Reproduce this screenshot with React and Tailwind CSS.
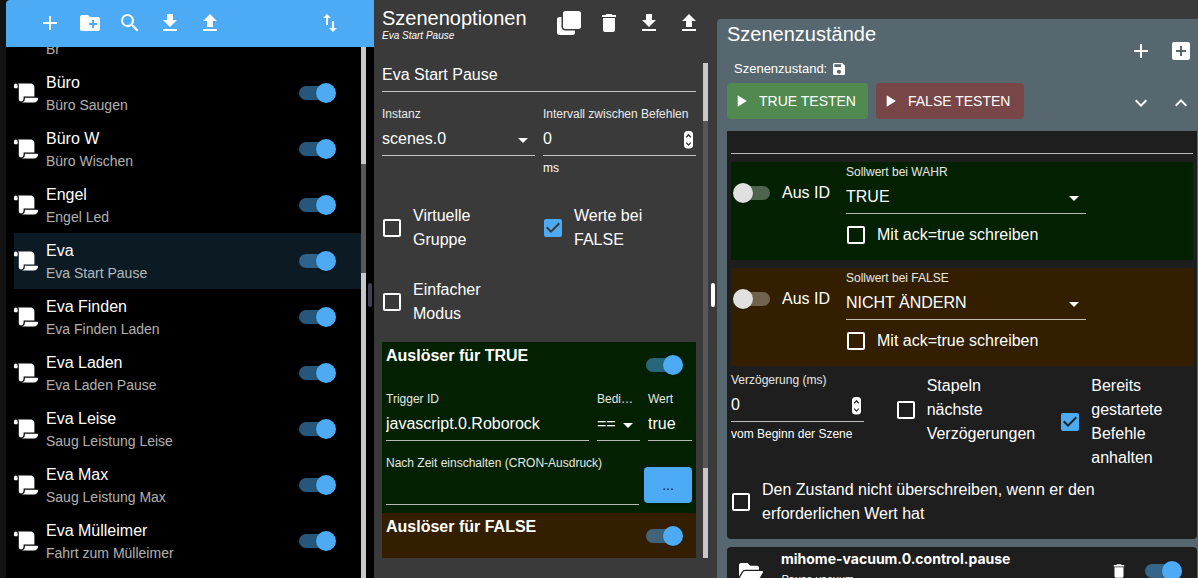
import React from "react";
import { FaClone, FaFolderOpen, FaScroll } from "react-icons/fa";
import {
  MdAdd,
  MdAddBox,
  MdArrowDropDown,
  MdCheckBox,
  MdCheckBoxOutlineBlank,
  MdCreateNewFolder,
  MdDelete,
  MdDownload,
  MdExpandLess,
  MdExpandMore,
  MdImportExport,
  MdPlayArrow,
  MdSave,
  MdSearch,
  MdUpload,
} from "react-icons/md";

const scenes = [
  { name: "Büro", desc: "Büro Saugen" },
  { name: "Büro W", desc: "Büro Wischen" },
  { name: "Engel", desc: "Engel Led" },
  { name: "Eva", desc: "Eva Start Pause", selected: true },
  { name: "Eva Finden", desc: "Eva Finden Laden" },
  { name: "Eva Laden", desc: "Eva Laden Pause" },
  { name: "Eva Leise", desc: "Saug Leistung Leise" },
  { name: "Eva Max", desc: "Saug Leistung Max" },
  { name: "Eva Mülleimer", desc: "Fahrt zum Mülleimer" },
];

const IconButton = ({ icon: Icon, label, size = 24 }) => (
  <button type="button" aria-label={label} className="flex size-10 shrink-0 items-center justify-center rounded-full text-white hover:bg-white/10">
    <Icon size={size} />
  </button>
);

const Toggle = ({ on = true, label, id }) => (
  <input
    id={id}
    type="checkbox"
    role="switch"
    aria-label={label}
    defaultChecked={on}
    className="relative h-5 w-[37px] shrink-0 cursor-pointer appearance-none before:absolute before:right-0 before:top-[3px] before:h-3.5 before:w-[34px] before:rounded-full before:bg-white/30 after:absolute after:left-0 after:top-0 after:size-5 after:rounded-full after:bg-[#e0e0e0] after:shadow checked:before:left-0 checked:before:right-auto checked:before:bg-[#4dabf5]/50 checked:after:left-auto checked:after:right-0 checked:after:bg-[#4dabf5]"
  />
);

const CheckField = ({ checked = false, textClass = "", children }) => (
  <label className="flex cursor-pointer items-center gap-[11px]">
    <span className="relative flex w-5 shrink-0 justify-center">
      <input type="checkbox" defaultChecked={checked} className="peer absolute inset-0 opacity-0" />
      <MdCheckBoxOutlineBlank size={24} className="shrink-0 peer-checked:hidden" />
      <MdCheckBox size={24} className="hidden shrink-0 text-[#4dabf5] peer-checked:block" />
    </span>
    <span className={textClass}>{children}</span>
  </label>
);

const Field = ({ label, helper, id, className = "", children }) => (
  <div className={className}>
    <label htmlFor={id} className="block text-xs leading-4 whitespace-nowrap text-white/90">
      {label}
    </label>
    {children}
    {helper && <p className="mt-1 text-xs leading-4 whitespace-nowrap">{helper}</p>}
  </div>
);

const TextInput = ({ id, value = "" }) => (
  <input id={id} defaultValue={value} className="block h-[34px] w-full border-b border-white/70 bg-transparent outline-none" />
);

const SelectInput = ({ id, value }) => (
  <div className="relative">
    <select id={id} className="block h-[34px] w-full appearance-none border-b border-white/70 bg-transparent outline-none">
      <option>{value}</option>
    </select>
    <MdArrowDropDown size={24} className="pointer-events-none absolute top-1.5 right-0" />
  </div>
);

const NumberInput = ({ id, value }) => (
  <div className="relative">
    <input
      id={id}
      type="number"
      defaultValue={value}
      className="block h-[34px] w-full border-b border-white/70 bg-transparent outline-none [appearance:textfield] [&::-webkit-inner-spin-button]:appearance-none"
    />
    <svg viewBox="0 0 9 18" className="pointer-events-none absolute top-[9px] right-[3px] h-[18px] w-[9px]" fill="none">
      <rect width="9" height="17.5" rx="3.5" fill="#fff" />
      <path d="M2.2 6.2 4.5 3.7 6.8 6.2M2.2 11.6 4.5 14.1 6.8 11.6" stroke="#333" strokeWidth="1.3" />
    </svg>
  </div>
);

const SceneList = () => (
  <aside className="relative flex min-w-0 flex-1 flex-col bg-black">
    <header className="flex h-[47px] shrink-0 items-start justify-between rounded-tl bg-[#4dabf5] px-6 pt-[3px]">
      <div className="flex">
        <IconButton icon={MdAdd} label="Neue Szene" />
        <IconButton icon={MdCreateNewFolder} label="Neuer Ordner" />
        <IconButton icon={MdSearch} label="Suchen" />
        <IconButton icon={MdDownload} label="Importieren" />
        <IconButton icon={MdUpload} label="Exportieren" />
      </div>
      <IconButton icon={MdImportExport} label="Sortieren" />
    </header>
    <div className="flex min-h-0 flex-1 px-2">
      <ul className="min-w-0 flex-1 overflow-hidden">
        <li className="flex h-[18px] flex-col justify-end overflow-hidden pb-1.5 pl-8 text-sm leading-5 text-white/70">Br</li>
        {scenes.map((scene) => (
          <li key={scene.name} className={`flex h-14 items-center gap-2 pr-[25px] ${scene.selected ? "bg-[#0c1a24]" : ""}`}>
            <FaScroll size={24} className="shrink-0" />
            <div className="min-w-0 flex-1">
              <p className="truncate leading-6">{scene.name}</p>
              <p className="truncate text-sm leading-5 text-white/70">{scene.desc}</p>
            </div>
            <Toggle label={scene.name} />
          </li>
        ))}
      </ul>
      <div className="flex w-[5px] shrink-0 flex-col bg-[#c8c8c8]">
        <div className="mt-[117px] h-[109px] bg-[#575757]" />
      </div>
    </div>
    <div className="absolute top-[49%] right-0.5 h-6 w-1 rounded-full bg-[#3f3f51]" />
  </aside>
);

const TriggerHeader = ({ title }) => (
  <div className="flex h-[49px] items-start justify-between pt-[2px] pr-[13px] pl-1">
    <h3 className="leading-6 font-bold">{title}</h3>
    <div className="flex pt-[11px]">
      <Toggle label={title} />
    </div>
  </div>
);

const SceneOptions = () => (
  <section className="relative flex min-w-0 flex-col">
    <header className="flex h-[47px] shrink-0 items-start justify-between px-2 pt-[3px]">
      <div className="pt-[3px]">
        <h2 className="text-xl leading-6">Szenenoptionen</h2>
        <p className="text-[10px] leading-3 italic">Eva Start Pause</p>
      </div>
      <div className="flex">
        <IconButton icon={FaClone} label="Duplizieren" />
        <IconButton icon={MdDelete} label="Löschen" />
        <IconButton icon={MdDownload} label="Importieren" />
        <IconButton icon={MdUpload} label="Exportieren" />
      </div>
    </header>
    <div className="mt-4 mb-5 flex min-h-0 flex-1 gap-[7px] pr-[9px] pl-2">
      <div className="min-w-0 flex-1 overflow-hidden">
        <input aria-label="Name" defaultValue="Eva Start Pause" className="block h-[29px] w-full border-b border-white/70 bg-transparent pb-1 outline-none" />
        <div className="mt-3.5 grid grid-cols-2 gap-x-2">
          <Field label="Instanz" id="instance">
            <SelectInput id="instance" value="scenes.0" />
          </Field>
          <Field label="Intervall zwischen Befehlen" id="interval" helper="ms">
            <NumberInput id="interval" value="0" />
          </Field>
        </div>
        <div className="mt-7 grid grid-cols-2 gap-x-2 gap-y-[26px]">
          <CheckField textClass="max-w-24">Virtuelle Gruppe</CheckField>
          <CheckField checked textClass="max-w-24">Werte bei FALSE</CheckField>
          <CheckField textClass="max-w-24">Einfacher Modus</CheckField>
        </div>
        <div className="mt-4 bg-[#032100] pb-2">
          <TriggerHeader title="Auslöser für TRUE" />
          <div className="flex gap-2 px-1">
            <Field label="Trigger ID" id="trigger" className="min-w-0 flex-1">
              <TextInput id="trigger" value="javascript.0.Roborock" />
            </Field>
            <Field label="Bedi…" id="condition" className="w-[43px]">
              <SelectInput id="condition" value="==" />
            </Field>
            <Field label="Wert" id="value" className="w-11">
              <TextInput id="value" value="true" />
            </Field>
          </div>
          <div className="mt-3.5 flex items-start gap-[5px] px-1">
            <Field label="Nach Zeit einschalten (CRON-Ausdruck)" id="cron" className="min-w-0 flex-1">
              <TextInput id="cron" />
            </Field>
            <button type="button" className="mt-3 h-9 w-12 rounded bg-[#4dabf5] text-sm text-black/85 shadow">
              ...
            </button>
          </div>
        </div>
        <div className="bg-[#331f00]">
          <TriggerHeader title="Auslöser für FALSE" />
        </div>
      </div>
      <div className="flex w-[5px] shrink-0 flex-col bg-[#c8c8c8]">
        <div className="mt-[58px] h-[347px] bg-[#575757]" />
      </div>
    </div>
    <div className="absolute top-[49%] right-0.5 h-6 w-1 rounded-full bg-white" />
  </section>
);

const SetpointBlock = ({ id, label, value, className }) => (
  <div className={`flex pt-0.5 pb-[13px] pl-0.5 ${className}`}>
    <div className="mt-[17px] flex h-6 w-[113px] shrink-0 items-center gap-3">
      <Toggle on={false} id={`${id}-from-id`} />
      <label htmlFor={`${id}-from-id`}>Aus ID</label>
    </div>
    <div className="w-60">
      <Field label={label} id={id}>
        <SelectInput id={id} value={value} />
      </Field>
      <div className="mt-[9px]">
        <CheckField>Mit ack=true schreiben</CheckField>
      </div>
    </div>
  </div>
);

const SceneStates = () => (
  <section className="flex min-w-0 flex-col pt-[19px]">
    <div className="flex-1 rounded-tl bg-[#57676f] pr-px pl-2.5">
      <header className="flex justify-between">
        <div className="pt-[3px]">
          <h2 className="text-xl leading-6">Szenenzustände</h2>
          <p className="mt-[15px] flex items-center gap-1 pl-[7px] text-[13px] leading-4">
            Szenenzustand: <MdSave size={16} />
          </p>
          <div className="mt-1.5 flex gap-2">
            <button type="button" className="flex h-9 w-[141px] items-center gap-2 rounded bg-[#508a50] pl-1 text-sm text-white">
              <MdPlayArrow size={20} /> TRUE TESTEN
            </button>
            <button type="button" className="flex h-9 w-[148px] items-center gap-2 rounded bg-[#784646] pl-1 text-sm text-white">
              <MdPlayArrow size={20} /> FALSE TESTEN
            </button>
          </div>
        </div>
        <div className="-mr-1 grid grid-cols-2 content-start gap-y-3 pt-3">
          <IconButton icon={MdAdd} label="Hinzufügen" />
          <IconButton icon={MdAddBox} label="Gruppe hinzufügen" />
          <IconButton icon={MdExpandMore} label="Alle aufklappen" />
          <IconButton icon={MdExpandLess} label="Alle zuklappen" />
        </div>
      </header>

      <article className="mt-2 rounded-b bg-[#1e1e1e] px-1 pb-[13px]">
        <input aria-label="Beschreibung" className="block h-[23px] w-full border-b border-white/70 bg-transparent outline-none" />
        <div className="mt-2 flex flex-col gap-2">
          <SetpointBlock id="on-true" label="Sollwert bei WAHR" value="TRUE" className="bg-[#032100]" />
          <SetpointBlock id="on-false" label="Sollwert bei FALSE" value="NICHT ÄNDERN" className="bg-[#331f00]" />
        </div>
        <div className="grid grid-cols-[165fr_165fr_133fr] items-start pt-1.5">
          <Field label="Verzögerung (ms)" id="delay" helper="vom Beginn der Szene" className="pr-8">
            <NumberInput id="delay" value="0" />
          </Field>
          <div className="pt-0.5">
            <CheckField textClass="max-w-28">Stapeln nächste Verzögerungen</CheckField>
          </div>
          <div className="pt-0.5">
            <CheckField checked>Bereits gestartete Befehle anhalten</CheckField>
          </div>
        </div>
        <div className="mt-2 pr-5">
          <CheckField>Den Zustand nicht überschreiben, wenn er den erforderlichen Wert hat</CheckField>
        </div>
      </article>

      <article className="mt-2 flex items-start rounded-t bg-[#1e1e1e] pr-[15px] pl-3">
        <FaFolderOpen size={24} className="mt-3 shrink-0" />
        <div className="min-w-0 flex-1 pl-[18px]">
          <h3 className="truncate font-['Inter'] text-sm leading-6 font-bold">mihome-vacuum.0.control.pause</h3>
          <p className="text-[11px] leading-4 italic">Pause vacuum</p>
        </div>
        <div className="flex items-center gap-1.5 pt-1">
          <IconButton icon={MdDelete} label="Löschen" size={18} />
          <Toggle label="Aktiv" />
        </div>
      </article>
    </div>
  </section>
);

const App = () => {
  return (
    <main className="grid h-screen grid-cols-[374fr_343fr_481fr] grid-rows-[minmax(0,1fr)] overflow-hidden bg-[#3a3a3a] font-['Liberation_Sans',sans-serif] text-base text-white">
      <div className="flex min-w-0 bg-[#121212] pl-1.5">
        <SceneList />
      </div>
      <SceneOptions />
      <SceneStates />
    </main>
  );
};

export default App;
